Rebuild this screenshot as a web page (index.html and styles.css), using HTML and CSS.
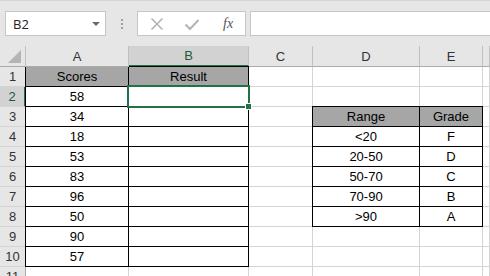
FILE: index.html
```html
<!DOCTYPE html>
<html>
<head>
<meta charset="utf-8">
<link rel="stylesheet" href="styles.css">
</head>
<body>
<div class="app">
  <div class="fbar">
    <div class="namebox"><span class="nb-text">B2</span>
      <svg class="nb-arrow" width="8" height="4" viewBox="0 0 8 4"><path d="M0 0h8L4 4z" fill="#6b6b6b"/></svg>
    </div>
    <div class="dots"><i></i><i></i><i></i></div>
    <div class="fbtns">
      <svg class="ico" width="14" height="14" viewBox="0 0 14 14"><path d="M1.5 1.5l11 11M12.5 1.5l-11 11" stroke="#b4b4b4" stroke-width="1.6" fill="none"/></svg>
      <svg class="ico" width="16" height="14" viewBox="0 0 16 14"><path d="M1.5 7.5l4.5 4.5 8.5-9" stroke="#b4b4b4" stroke-width="2" fill="none"/></svg>
      <span class="fx">fx</span>
    </div>
    <div class="finput"></div>
  </div>
  <div class="sheet">
    <div class="h corner"><svg width="13" height="13" viewBox="0 0 13 13"><path d="M13 0V13H0z" fill="#b4b4b4"/></svg></div>
    <div class="h ch">A</div><div class="h ch sel">B</div><div class="h ch">C</div><div class="h ch">D</div><div class="h ch">E</div><div class="h ch last"></div>

    <div class="h rh">1</div><div class="c g t tl">Scores</div><div class="c g t tt">Result</div><div class="c"></div><div class="c"></div><div class="c"></div><div class="c"></div>
    <div class="h rh rsel">2</div><div class="c t tl">58</div><div class="c t active"></div><div class="c"></div><div class="c"></div><div class="c"></div><div class="c"></div>
    <div class="h rh">3</div><div class="c t tl">34</div><div class="c t"></div><div class="c"></div><div class="c g t tl tt">Range</div><div class="c g t tt">Grade</div><div class="c"></div>
    <div class="h rh">4</div><div class="c t tl">18</div><div class="c t"></div><div class="c"></div><div class="c t tl">&lt;20</div><div class="c t">F</div><div class="c"></div>
    <div class="h rh">5</div><div class="c t tl">53</div><div class="c t"></div><div class="c"></div><div class="c t tl">20-50</div><div class="c t">D</div><div class="c"></div>
    <div class="h rh">6</div><div class="c t tl">83</div><div class="c t"></div><div class="c"></div><div class="c t tl">50-70</div><div class="c t">C</div><div class="c"></div>
    <div class="h rh">7</div><div class="c t tl">96</div><div class="c t"></div><div class="c"></div><div class="c t tl">70-90</div><div class="c t">B</div><div class="c"></div>
    <div class="h rh">8</div><div class="c t tl">50</div><div class="c t"></div><div class="c"></div><div class="c t tl">&gt;90</div><div class="c t">A</div><div class="c"></div>
    <div class="h rh">9</div><div class="c t tl">90</div><div class="c t"></div><div class="c"></div><div class="c"></div><div class="c"></div><div class="c"></div>
    <div class="h rh">10</div><div class="c t tl">57</div><div class="c t"></div><div class="c"></div><div class="c"></div><div class="c"></div><div class="c"></div>
    <div class="h rh">11</div><div class="c"></div><div class="c"></div><div class="c"></div><div class="c"></div><div class="c"></div><div class="c"></div>
  </div>
</div>
</body>
</html>
```

FILE: styles.css
```css
* { box-sizing: border-box; }
html, body { margin: 0; padding: 0; }
body { background: #fff; font-family: "Liberation Sans", Arial, sans-serif; font-size: 13px; color: #000; }
.app { width: 490px; height: 276px; overflow: hidden; background: #fff; }

.fbar { height: 46px; background: #e6e6e6; border-top: 1px solid #d6d6d6; display: flex; align-items: flex-start; padding: 10px 0 0 5px; }
.namebox { width: 101px; height: 25px; background: #fff; border: 1px solid #c6c6c6; display: flex; align-items: center; justify-content: space-between; padding: 0 5px 0 7px; }
.nb-text { font-family: "Open Sans", sans-serif; font-size: 13px; color: #222; }
.nb-arrow { margin-top: 1px; }
.dots { width: 31px; height: 25px; display: flex; flex-direction: column; align-items: center; justify-content: center; gap: 2px; }
.dots i { display: block; width: 2px; height: 2px; background: #a0a0a0; }
.fbtns { width: 109px; height: 25px; background: #fff; border: 1px solid #c6c6c6; display: flex; align-items: center; padding: 0 0 0 12px; gap: 20px; }
.fx { font-family: "Liberation Serif", serif; font-style: italic; font-size: 14px; color: #555; margin-left: 3px; }
.finput { flex: 1; height: 25px; margin-left: 4px; background: #fff; border: 1px solid #c6c6c6; border-right: none; }

.sheet { display: grid; grid-template-columns: 26px 103px 120px 64px 107px 63px 1fr; grid-template-rows: 21px repeat(11, 20px); }
.h { background: #e6e6e6; color: #333; display: flex; align-items: center; justify-content: center; font-size: 13px; }
.corner { border-right: 1px solid #c0c0c0; border-bottom: 1px solid #ababab; justify-content: flex-end; align-items: flex-end; padding: 0 4px 3px 0; }
.ch { border-right: 1px solid #c0c0c0; border-bottom: 1px solid #ababab; }
.ch.sel { background: #d2d2d2; color: #1d5b37; border-bottom: 2px solid #217346; }
.rh { border-right: 1px solid #ababab; border-bottom: 1px solid #d4d4d4; justify-content: center; }
.rsel { background: #d2d2d2; color: #1d5b37; border-right: 2px solid #217346; }

.c { border-right: 1px solid #d4d4d4; border-bottom: 1px solid #d4d4d4; display: flex; align-items: center; justify-content: center; color: #000; }
.c.t { border-right-color: #000; border-bottom-color: #000; }
.c.tl { box-shadow: -1px 0 0 #000; }
.c.tt { box-shadow: 0 -1px 0 #000; }
.c.tl.tt { box-shadow: -1px 0 0 #000, 0 -1px 0 #000, -1px -1px 0 #000; }
.c.g { background: #a6a6a6; }

.active { position: relative; }
.active::after { content: ""; position: absolute; left: -2px; top: -2px; right: -2px; bottom: -2px; border: 2px solid #217346; }
.active::before { content: ""; position: absolute; right: -4px; bottom: -4px; width: 5px; height: 5px; background: #217346; border: 1px solid #fff; z-index: 2; }
```
